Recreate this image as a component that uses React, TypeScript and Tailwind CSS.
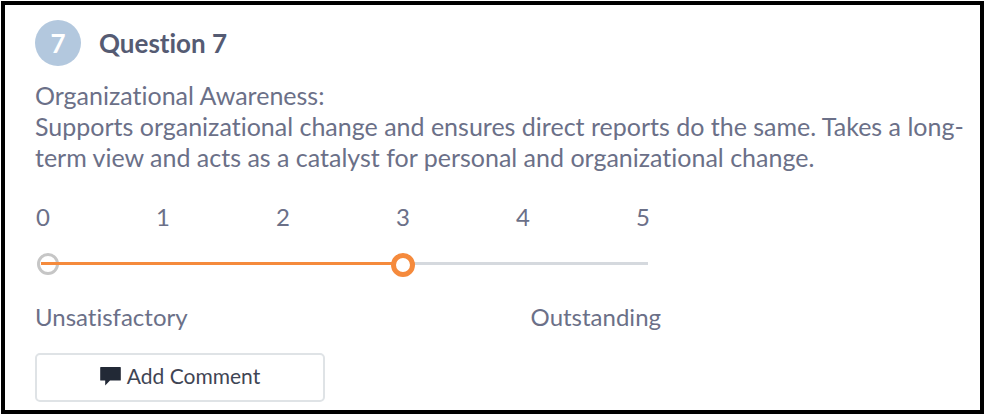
import { useState } from 'react';

const SCALE = [0, 1, 2, 3, 4, 5];

function CommentIcon() {
  return (
    <svg viewBox="0 0 21 20" className="h-5 w-[21px] shrink-0" fill="#222936" aria-hidden="true">
      <path d="M0.8 1h19.4a.6.6 0 0 1 .6.6v12.3a.6.6 0 0 1-.6.6H10L5.2 19.5V14.5H.8a.6.6 0 0 1-.6-.6V1.6A.6.6 0 0 1 .8 1z" />
    </svg>
  );
}

interface RatingSliderProps {
  value: number;
  onChange: (value: number) => void;
}

function RatingSlider({ value, onChange }: RatingSliderProps) {
  const percent = (value / 5) * 100;

  return (
    <div className="relative mr-[18px] ml-2 h-6">
      <span className="absolute top-0 -left-[6px] size-[22px] rounded-full border-[3px] border-[#c6c6c6]" />
      <span className="absolute top-[9px] -right-[5px] left-4 h-[3px] bg-[#d5d9de]" />
      <span className="absolute top-[9px] -left-[2px] h-[3px] bg-[#f58a3c]" style={{ width: `${percent}%` }} />
      <input
        id="rating"
        type="range"
        min={0}
        max={5}
        step={1}
        value={value}
        onChange={(e) => onChange(Number(e.target.value))}
        className="absolute top-0 -left-3 h-6 w-[calc(100%+24px)] cursor-pointer appearance-none bg-transparent [&::-webkit-slider-thumb]:size-6 [&::-webkit-slider-thumb]:appearance-none [&::-webkit-slider-thumb]:rounded-full [&::-webkit-slider-thumb]:border-[5px] [&::-webkit-slider-thumb]:border-[#f58a3c] [&::-webkit-slider-thumb]:bg-white"
      />
    </div>
  );
}

export default function App() {
  const [rating, setRating] = useState(3);

  return (
    <main className="bg-white p-px font-['Lato',sans-serif] text-2xl text-[#6b7088] [font-variant-ligatures:none]">
      <section className="border-4 border-black pt-[15px] pr-2 pb-2 pl-[30px]">
        <header className="flex items-center gap-[18px]">
          <span className="flex size-[46px] items-center justify-center rounded-full bg-[#b3c8de] text-[26px] font-bold text-white">
            7
          </span>
          <h1 className="text-[26px] font-bold text-[#555b73]">Question 7</h1>
        </header>

        <p className="mt-[14px] text-[25px] leading-[31px]">
          Organizational Awareness:
          <br />
          Supports organizational change and ensures direct reports do the same. Takes a long-term view and acts as a
          catalyst for personal and organizational change.
        </p>

        <div className="mt-7 max-w-[626px]">
          <label htmlFor="rating" className="mr-[10px] flex justify-between leading-8">
            {SCALE.map((n) => (
              <span key={n} className="w-4 text-center">
                {n}
              </span>
            ))}
          </label>
          <div className="mt-5">
            <RatingSlider value={rating} onChange={setRating} />
          </div>
          <div className="mt-6 flex justify-between leading-8">
            <span>Unsatisfactory</span>
            <span>Outstanding</span>
          </div>
        </div>

        <button
          type="button"
          className="mt-5 flex h-[49px] w-[290px] cursor-pointer items-center justify-center gap-[6px] rounded-[5px] border-2 border-[#dfe3e6] pb-1 text-[21px] text-[#3f4554]"
        >
          <CommentIcon />
          Add Comment
        </button>
      </section>
    </main>
  );
}
